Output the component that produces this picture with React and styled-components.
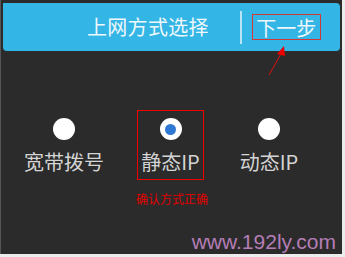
import React from 'react'
import styled, { createGlobalStyle } from 'styled-components'

const GlobalStyle = createGlobalStyle`
  html, body {
    margin: 0;
    padding: 0;
    background: #ececec;
  }
  body {
    font-family: "Noto Sans CJK SC", "Liberation Sans", sans-serif;
  }
`

const Frame = styled.div`
  position: relative;
  width: 342px;
  height: 254px;
  box-sizing: border-box;
  padding: 3px 2px 0 3px;
  background: #2b2b2b;
  border-left: 1px solid #555;
`

const Header = styled.div`
  display: flex;
  align-items: center;
  height: 48px;
  margin-left: -1px;
  padding-left: 84px;
  background: #33b5e5;
  border-radius: 0 4px 4px 4px;
`

const Title = styled.div`
  font-size: 20px;
  line-height: 24px;
  color: #eef8fc;
  letter-spacing: 0.3px;
`

const Divider = styled.div`
  width: 2px;
  height: 33px;
  margin-left: 31px;
  background: #b8e4f6;
`

const NextButton = styled.div`
  margin-left: 10px;
  width: 69px;
  height: 26px;
  box-sizing: border-box;
  border: 1px solid #d23a3a;
  display: flex;
  align-items: center;
  justify-content: center;
  font-size: 20px;
  color: #eef8fc;
`

const Options = styled.div`
  display: flex;
  margin-top: 59px;
`

const Option = styled.div`
  display: flex;
  flex-direction: column;
  align-items: center;
  box-sizing: border-box;
  width: ${p => p.$width}px;
  margin-left: ${p => p.$offset}px;
  height: 70px;
  padding-top: 7px;
  border: 1px solid ${p => (p.$marked ? '#ee0000' : 'transparent')};
`

const Radio = styled.div`
  width: 22px;
  height: 22px;
  border-radius: 50%;
  background: #fff;
  display: flex;
  align-items: center;
  justify-content: center;

  &::after {
    content: '';
    display: ${p => (p.$checked ? 'block' : 'none')};
    width: 11px;
    height: 11px;
    border-radius: 50%;
    background: #2f78d4;
  }
`

const Label = styled.div`
  margin-top: 10px;
  font-size: 20px;
  line-height: 24px;
  color: #d4d4d4;
  white-space: nowrap;
`

const Caption = styled.div`
  margin-top: 11px;
  padding-left: 132px;
  font-size: 12px;
  line-height: 16px;
  color: #e00000;
`

const Watermark = styled.div`
  margin-top: 23px;
  padding-right: 4px;
  text-align: right;
  font-family: "Liberation Sans", Arial, sans-serif;
  font-size: 21px;
  line-height: 24px;
  color: #b57db6;
`

const Arrow = styled.svg`
  position: absolute;
  left: 262px;
  top: 42px;
`

const options = [
  { label: '宽带拨号', width: 120, offset: 0 },
  { label: '静态IP', width: 67, offset: 13, checked: true, marked: true },
  { label: '动态IP', width: 124, offset: 3 }
]

export default function App () {
  return (
    <>
      <GlobalStyle />
      <Frame>
        <Header>
          <Title>上网方式选择</Title>
          <Divider />
          <NextButton>下一步</NextButton>
        </Header>
        <Options>
          {options.map(o => (
            <Option key={o.label} $width={o.width} $offset={o.offset} $marked={o.marked}>
              <Radio $checked={o.checked} />
              <Label>{o.label}</Label>
            </Option>
          ))}
        </Options>
        <Caption>确认方式正确</Caption>
        <Watermark>www.192ly.com</Watermark>
        <Arrow width='30' height='40' viewBox='0 0 30 40'>
          <line x1='6' y1='33' x2='19' y2='10' stroke='#e01010' strokeWidth='1' />
          <polygon points='21,4 14,12 22,14' fill='#ee0000' />
        </Arrow>
      </Frame>
    </>
  )
}
